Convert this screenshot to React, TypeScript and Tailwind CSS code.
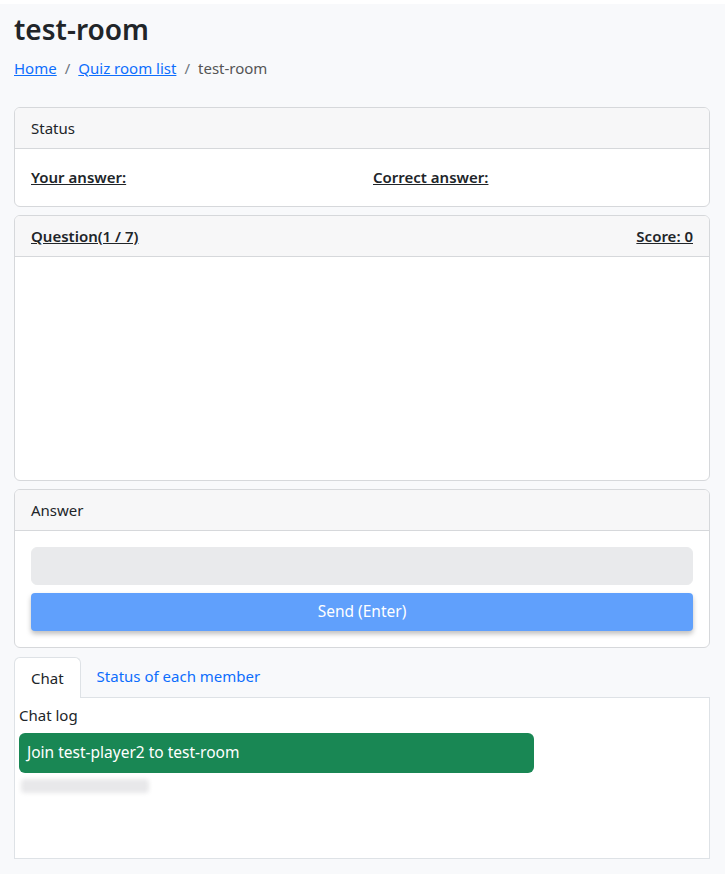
export default function App() {
  const font = { fontFamily: '"Segoe UI", "Noto Sans", "Liberation Sans", sans-serif' };

  return (
    <div className="min-h-[874px] bg-white pt-1 text-[16px] text-[#212529]" style={font}>
      <div className="min-h-[870px] bg-[#f8f9fb] px-[14px] pb-4 pt-[9px] pr-[15px]">
        {/* title + breadcrumb */}
        <h3 className="text-[28px] font-semibold leading-[1.2]">test-room</h3>
        <nav className="mt-[10px] flex items-center gap-2 text-[15px] text-[#6c757d]">
          <a className="text-[#0d6efd] underline">Home</a>
          <span>/</span>
          <a className="text-[#0d6efd] underline">Quiz room list</a>
          <span>/</span>
          <span className="text-[#555]">test-room</span>
        </nav>

        {/* status */}
        <div className="mt-[28px] overflow-hidden rounded-[6px] border border-[#d6d8db] bg-white">
          <div className="flex h-[41px] items-center border-b border-[#d6d8db] bg-[#f7f7f8] px-4 text-[15px]">
            Status
          </div>
          <div className="grid h-[57px] grid-cols-2 items-center px-4 text-[15px] font-semibold">
            <span className="underline">Your answer:</span>
            <span className="pl-[11px] underline">Correct answer:</span>
          </div>
        </div>

        {/* question */}
        <div className="mt-2 overflow-hidden rounded-[6px] border border-[#d6d8db] bg-white">
          <div className="flex h-[41px] items-center justify-between border-b border-[#d6d8db] bg-[#f7f7f8] px-4 text-[15px] font-semibold">
            <span className="underline">Question(1 / 7)</span>
            <span className="underline">Score: 0</span>
          </div>
          <div className="h-[223px]" />
        </div>

        {/* answer */}
        <div className="mt-2 overflow-hidden rounded-[6px] border border-[#d6d8db] bg-white">
          <div className="flex h-[41px] items-center border-b border-[#d6d8db] bg-[#f7f7f8] px-4 text-[15px]">
            Answer
          </div>
          <div className="flex flex-col gap-2 px-4 pb-4 pt-4">
            <input
              disabled
              className="h-[38px] w-full rounded-[6px] border border-[#e9eaec] bg-[#e9eaec]"
            />
            <button className="h-[38px] w-full rounded-[4px] bg-[#60a0fc] text-[15.5px] text-white shadow-[0_3px_5px_rgba(0,0,0,0.25)]">
              Send (Enter)
            </button>
          </div>
        </div>

        {/* tabs */}
        <div className="mt-2 flex h-[41px] items-end">
          <div className="relative -mb-px flex h-[41px] items-center rounded-t-[6px] border border-b-0 border-[#dee2e6] bg-white px-4 text-[15px]">
            Chat
          </div>
          <div className="flex h-[41px] items-center px-4 text-[15px] text-[#0d6efd]">
            Status of each member
          </div>
        </div>
        <div className="h-[162px] border border-[#dee2e6] bg-white px-1 pt-[6px]">
          <div className="text-[15px]">Chat log</div>
          <div className="mt-[6px] flex h-[40px] w-[515px] items-center rounded-[6px] bg-[#198754] px-2 text-[15.5px] text-white">
            Join test-player2 to test-room
          </div>
          <div className="ml-[2px] mt-[6px] h-[14px] w-[128px] rounded bg-[#e8e8ea] blur-[2px]" />
        </div>
      </div>
    </div>
  );
}
